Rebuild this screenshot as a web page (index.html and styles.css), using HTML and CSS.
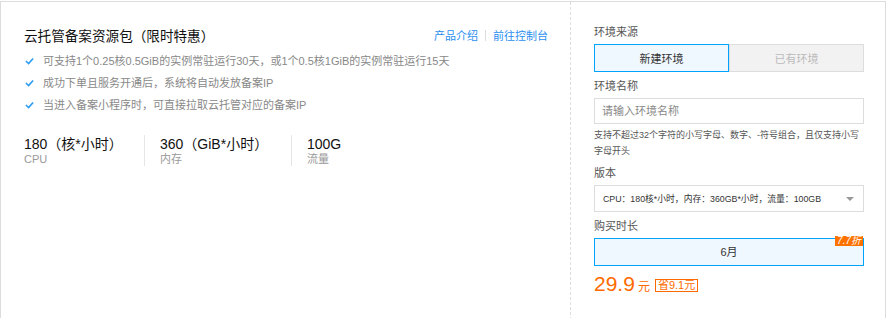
FILE: index.html
```html
<!DOCTYPE html>
<html lang="zh-CN">

<head>
    <meta charset="UTF-8">
    <meta name="viewport" content="width=device-width, initial-scale=1.0">
    <title>云托管备案资源包</title>
    <link rel="stylesheet" href="styles.css">
</head>

<body>

    <div class="panel">
        <!-- package info -->
        <div class="info">
            <div class="info-head">
                <h2 class="title">云托管备案资源包（限时特惠）</h2>
                <div class="links">
                    <a href="#">产品介绍</a>
                    <span class="sep"></span>
                    <a href="#">前往控制台</a>
                </div>
            </div>

            <ul class="features">
                <li>
                    <svg class="check" viewBox="0 0 10 8"><polyline points="1,4 4,6.8 9,1.2" /></svg>
                    可支持1个0.25核0.5GiB的实例常驻运行30天，或1个0.5核1GiB的实例常驻运行15天
                </li>
                <li>
                    <svg class="check" viewBox="0 0 10 8"><polyline points="1,4 4,6.8 9,1.2" /></svg>
                    成功下单且服务开通后，系统将自动发放备案IP
                </li>
                <li>
                    <svg class="check" viewBox="0 0 10 8"><polyline points="1,4 4,6.8 9,1.2" /></svg>
                    当进入备案小程序时，可直接拉取云托管对应的备案IP
                </li>
            </ul>

            <div class="stats">
                <div class="stat">
                    <div class="stat-num">180（核*小时）</div>
                    <div class="stat-label">CPU</div>
                </div>
                <div class="stat">
                    <div class="stat-num">360（GiB*小时）</div>
                    <div class="stat-label">内存</div>
                </div>
                <div class="stat">
                    <div class="stat-num">100G</div>
                    <div class="stat-label">流量</div>
                </div>
            </div>
        </div>

        <!-- order form -->
        <div class="order">
            <div class="field-label">环境来源</div>
            <div class="seg">
                <button class="seg-btn active">新建环境</button>
                <button class="seg-btn disabled">已有环境</button>
            </div>

            <div class="field-label gap">环境名称</div>
            <input class="text-input" type="text" placeholder="请输入环境名称">
            <p class="help">支持不超过32个字符的小写字母、数字、-符号组合，且仅支持小写字母开头</p>

            <div class="field-label gap">版本</div>
            <div class="select">
                <span>CPU：180核*小时，内存：360GB*小时，流量：100GB</span>
                <span class="caret"></span>
            </div>

            <div class="field-label gap">购买时长</div>
            <div class="duration">
                6月
                <span class="badge">7.7折</span>
            </div>

            <div class="price">
                <span class="amount">29.9</span>
                <span class="unit">元</span>
                <span class="save">省9.1元</span>
            </div>
        </div>
    </div>

</body>

</html>
```

FILE: styles.css
```css
* {
    margin: 0;
    padding: 0;
    box-sizing: border-box;
}

body {
    font-family: "Liberation Sans", Arial, "Noto Sans CJK SC", sans-serif;
    color: #333;
    background: #fff;
    padding-top: 1px;
}

.panel {
    display: flex;
    width: 886px;
    min-height: 340px;
    border: 1px solid #ddd;
}

/* Left side */
.info {
    width: 569px;
    padding: 22px 22px 0 23px;
}

.info-head {
    display: flex;
    justify-content: space-between;
    align-items: center;
    height: 22px;
}

.title {
    font-size: 13.6px;
    font-weight: normal;
    color: #111;
}

.links {
    display: flex;
    align-items: center;
    font-size: 11px;
}

.links a {
    color: #2b8ff0;
    text-decoration: none;
}

.sep {
    display: inline-block;
    width: 1px;
    height: 11px;
    background: #ddd;
    margin: 0 7px;
}

.features {
    list-style: none;
    margin-top: 4px;
}

.features li {
    display: flex;
    align-items: center;
    font-size: 11px;
    line-height: 22px;
    color: #888;
}

.check {
    width: 9px;
    height: 8px;
    margin: 0 9px 0 1px;
    fill: none;
    stroke: #2b9cf2;
    stroke-width: 1.8;
}

.stats {
    display: flex;
    margin-top: 19px;
}

.stat {
    width: 147px;
    padding-left: 15px;
    border-left: 1px solid #e6e6e6;
}

.stat:first-child {
    width: 120px;
    padding-left: 0;
    border-left: none;
}

.stat-num {
    font-size: 14px;
    line-height: 18px;
    color: #111;
}

.stat-label {
    font-size: 11px;
    line-height: 13px;
    color: #999;
}

/* Right side */
.order {
    width: 315px;
    border-left: 1px dashed #ddd;
    padding: 22px 21px 0 23px;
}

.field-label {
    font-size: 11px;
    line-height: 17px;
    color: #555;
    margin-bottom: 3px;
}

.field-label.gap {
    margin-top: 6px;
}

.seg {
    display: flex;
}

.seg-btn {
    flex: 1;
    height: 28px;
    font-family: inherit;
    font-size: 11px;
    border: 1px solid #ddd;
    background: #f2f2f2;
    color: #bbb;
}

.seg-btn.active {
    border-color: #00a4ff;
    background: #f0f8ff;
    color: #333;
}

.text-input {
    display: block;
    width: 100%;
    height: 26px;
    border: 1px solid #ddd;
    padding: 0 7px;
    font-family: inherit;
    font-size: 11px;
}

.text-input::placeholder {
    color: #888;
}

.help {
    font-size: 9px;
    line-height: 16px;
    color: #555;
    margin-top: 3px;
}

.select {
    display: flex;
    justify-content: space-between;
    align-items: center;
    height: 27px;
    border: 1px solid #ddd;
    padding: 0 9px 0 8px;
    font-size: 8.8px;
    color: #333;
}

.caret {
    width: 0;
    height: 0;
    border-left: 4px solid transparent;
    border-right: 4px solid transparent;
    border-top: 4px solid #999;
}

.duration {
    position: relative;
    height: 28px;
    border: 1px solid #00a4ff;
    background: #f0f8ff;
    font-size: 11px;
    line-height: 26px;
    text-align: center;
    color: #333;
}

.badge {
    position: absolute;
    top: -3px;
    right: 0;
    background: #ff7200;
    color: #fff;
    font-size: 10px;
    font-style: italic;
    line-height: 10px;
    padding: 0 2px;
}

.price {
    display: flex;
    align-items: center;
    margin-top: 6px;
    height: 24px;
    color: #ff6a00;
}

.amount {
    font-size: 21px;
}

.unit {
    font-size: 12px;
    margin: 3px 0 0 3px;
}

.save {
    font-size: 11px;
    line-height: 11px;
    border: 1px solid #ff6a00;
    padding: 0 2px;
    margin: 2px 0 0 5px;
}
```
